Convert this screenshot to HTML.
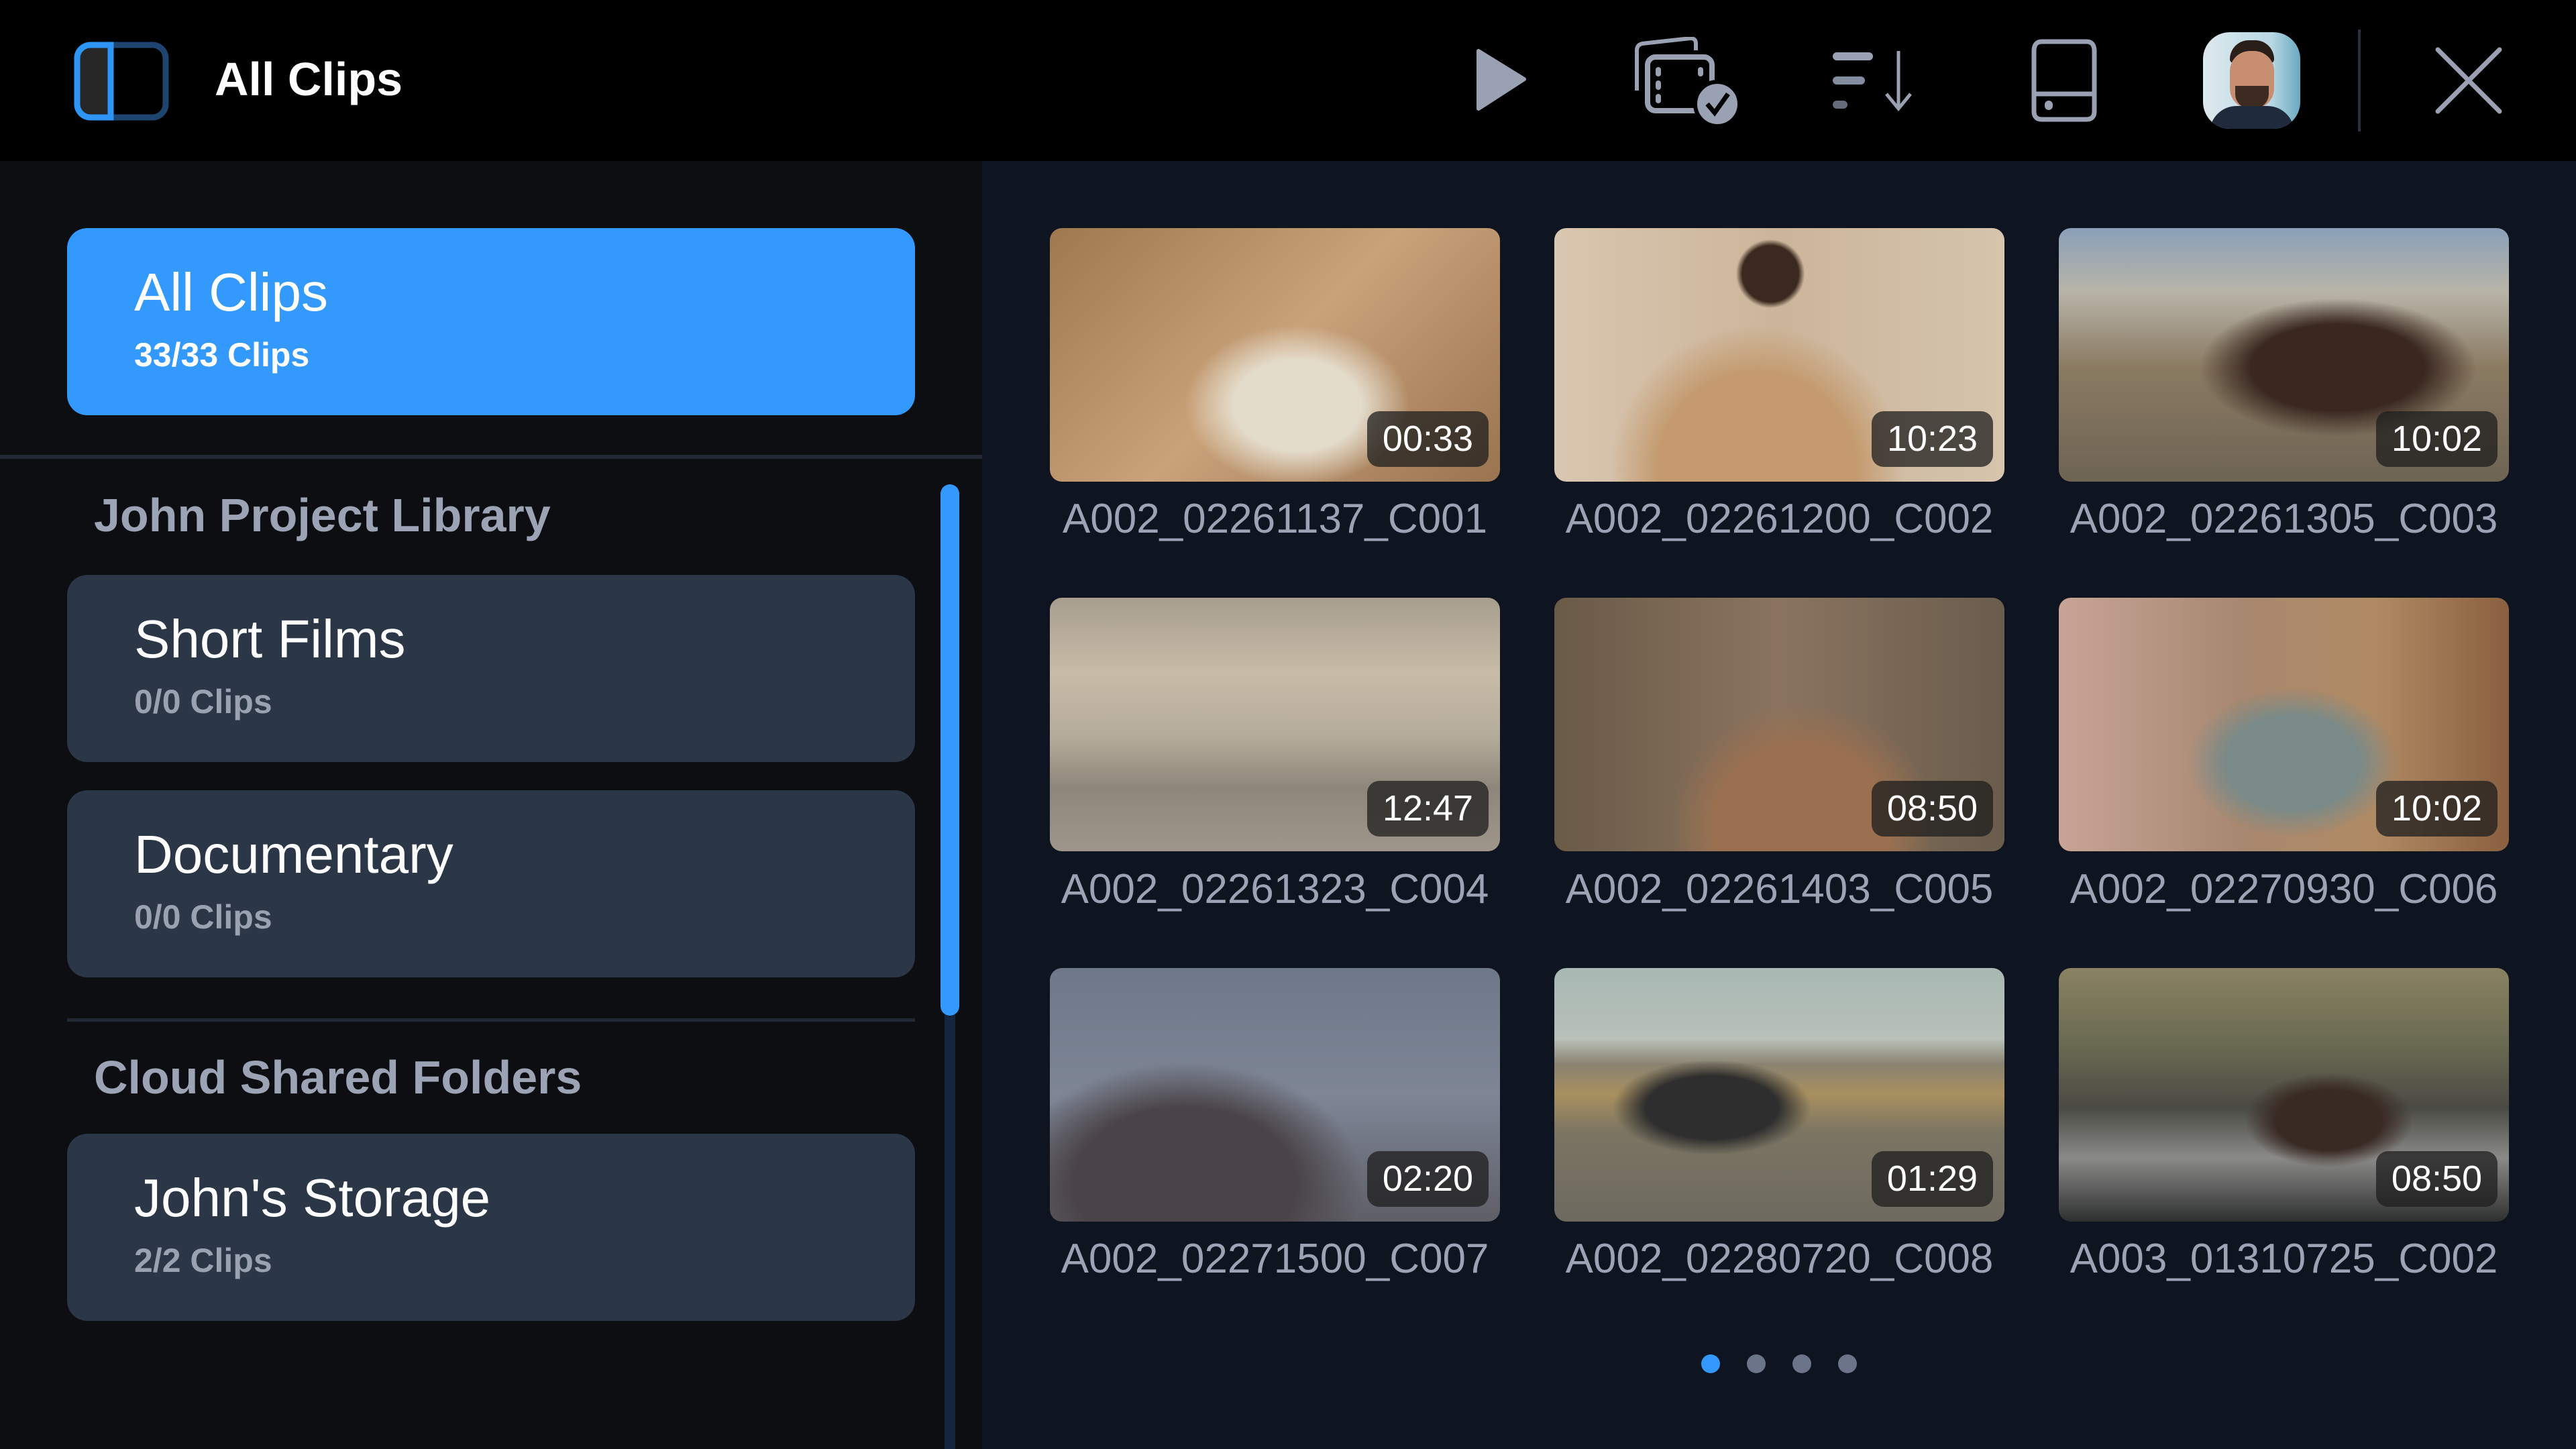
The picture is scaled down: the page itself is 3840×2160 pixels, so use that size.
<!DOCTYPE html>
<html><head><meta charset="utf-8"><style>
*{margin:0;padding:0;box-sizing:border-box}
body{width:3840px;height:2160px;overflow:hidden;background:#0e1520;font-family:"Liberation Sans",sans-serif;position:relative}
.abs{position:absolute}
#hdr{left:0;top:0;width:3840px;height:240px;background:#000}
#side{left:0;top:240px;width:1464px;height:1920px;background:#0d0e11}
.card{position:absolute;left:100px;width:1264px;height:279px;border-radius:30px;background:#2b3647}
.card .t{position:absolute;left:100px;top:50px;font-size:80px;color:#fff;white-space:nowrap}
.card .s{position:absolute;left:100px;top:160px;font-size:50px;color:#9aa2b2;font-weight:bold;white-space:nowrap}
.sec{position:absolute;left:140px;font-size:70px;color:#9ba3b4;font-weight:bold;white-space:nowrap}
.th{position:absolute;width:671px;height:378px;border-radius:18px;overflow:hidden}
.bd{position:absolute;right:17px;bottom:22px;width:181px;height:83px;border-radius:18px;background:rgba(30,30,30,.75);color:#fff;font-size:54px;text-align:center;line-height:83px}
.lb{position:absolute;width:671px;text-align:center;font-size:62px;color:#9ba3b4;white-space:nowrap}
.dot{position:absolute;top:2019px;width:28px;height:28px;border-radius:50%;background:#6b7488}
</style></head><body>
<div id="hdr" class="abs"></div>
<!-- header left icon -->
<svg class="abs" style="left:110px;top:62px" width="142" height="118" viewBox="0 0 142 118">
<rect x="5" y="5" width="132" height="108" rx="20" fill="none" stroke="#1e4470" stroke-width="9"/>
<path d="M55 5 H25 A20 20 0 0 0 5 25 V93 A20 20 0 0 0 25 113 H55 Z" fill="#262626" stroke="#2f95f5" stroke-width="9"/>
</svg>
<div class="abs" style="left:320px;top:78px;font-size:70px;color:#fff;font-weight:bold">All Clips</div>
<!-- play -->
<svg class="abs" style="left:2200px;top:70px" width="80" height="100" viewBox="0 0 80 100"><path d="M4 6 L72 48 L4 92 Z" fill="#9aa1b3" stroke="#9aa1b3" stroke-width="6" stroke-linejoin="round"/></svg>
<!-- clips check -->
<svg class="abs" style="left:2432px;top:55px" width="170" height="135" viewBox="0 0 170 135">
<path d="M8 80 V20 Q8 12 16 10 L88 2 Q96 2 96 10 V20" fill="none" stroke="#9aa1b3" stroke-width="6"/>
<rect x="24" y="30" width="96" height="80" rx="12" fill="none" stroke="#9aa1b3" stroke-width="8"/>
<rect x="36" y="45" width="8" height="14" rx="4" fill="#9aa1b3"/><rect x="36" y="65" width="8" height="14" rx="4" fill="#9aa1b3"/><rect x="36" y="85" width="8" height="14" rx="4" fill="#9aa1b3"/>
<rect x="99" y="45" width="8" height="14" rx="4" fill="#9aa1b3"/>
<circle cx="128" cy="100" r="33" fill="#9aa1b3" stroke="#000" stroke-width="6"/>
<path d="M113 100 L124 113 L144 85" fill="none" stroke="#000" stroke-width="7"/>
</svg>
<!-- sort -->
<svg class="abs" style="left:2730px;top:70px" width="140" height="100" viewBox="0 0 140 100">
<rect x="2" y="8" width="60" height="12" rx="6" fill="#9aa1b3"/>
<rect x="2" y="44" width="48" height="12" rx="6" fill="#858ca0"/>
<rect x="2" y="80" width="22" height="12" rx="6" fill="#656b7a"/>
<path d="M100 6 V92 M82 70 L100 92 L118 70" fill="none" stroke="#9aa1b3" stroke-width="5"/>
</svg>
<!-- drive -->
<svg class="abs" style="left:3024px;top:58px" width="110" height="124" viewBox="0 0 110 124">
<path d="M20 4 H86 Q98 4 98 18 V108 Q98 120 86 120 H20 Q8 120 8 108 V18 Q8 4 20 4 Z" fill="none" stroke="#9aa1b3" stroke-width="7"/>
<path d="M8 82 H98" stroke="#9aa1b3" stroke-width="7"/>
<rect x="24" y="92" width="12" height="14" rx="6" fill="#9aa1b3"/>
</svg>
<!-- avatar -->
<div class="abs" style="left:3284px;top:48px;width:145px;height:144px;border-radius:40px;overflow:hidden;background:linear-gradient(90deg,#dfe9ee,#b8d8e4 70%,#6aa9c0)">
<div class="abs" style="left:40px;top:12px;width:66px;height:34px;border-radius:30px 30px 6px 6px;background:#2a1e18"></div>
<div class="abs" style="left:40px;top:28px;width:66px;height:86px;border-radius:30px;background:#c88e72"></div>
<div class="abs" style="left:48px;top:80px;width:50px;height:34px;border-radius:0 0 22px 22px;background:#3d2a20"></div>
<div class="abs" style="left:10px;top:110px;width:126px;height:60px;border-radius:40px 40px 0 0;background:#1f2a3d"></div>
</div>
<div class="abs" style="left:3515px;top:44px;width:4px;height:152px;background:#2a2f3d"></div>
<svg class="abs" style="left:3628px;top:70px" width="104" height="100" viewBox="0 0 104 100"><path d="M6 4 L98 96 M98 4 L6 96" stroke="#9aa1b3" stroke-width="7" stroke-linecap="round"/></svg>

<div id="side" class="abs"></div>
<div class="card" style="top:340px;background:#3399fc"><div class="t">All Clips</div><div class="s" style="color:#fff">33/33 Clips</div></div>
<div class="abs" style="left:0;top:678px;width:1464px;height:6px;background:#222836"></div>
<div class="sec" style="top:728px">John Project Library</div>
<div class="card" style="top:857px"><div class="t">Short Films</div><div class="s">0/0 Clips</div></div>
<div class="card" style="top:1178px"><div class="t">Documentary</div><div class="s">0/0 Clips</div></div>
<div class="abs" style="left:100px;top:1518px;width:1264px;height:5px;background:#222836"></div>
<div class="sec" style="top:1566px">Cloud Shared Folders</div>
<div class="card" style="top:1690px"><div class="t">John's Storage</div><div class="s">2/2 Clips</div></div>
<div class="abs" style="left:1408px;top:730px;width:16px;height:1430px;background:#13243d"></div>
<div class="abs" style="left:1402px;top:722px;width:28px;height:792px;border-radius:14px;background:#3399fc"></div>

<!-- thumbnails -->
<div class="th" style="left:1565px;top:340px;background:radial-gradient(ellipse at 55% 70%,#e4dccb 0 18%,transparent 32%),linear-gradient(135deg,#a07850,#c9a27a 50%,#9a7450)"><div class="bd">00:33</div></div>
<div class="th" style="left:2317px;top:340px;background:radial-gradient(ellipse at 45% 95%,#c49a6e 0 28%,transparent 42%),radial-gradient(circle at 48% 18%,#3b281e 0 9%,transparent 11%),linear-gradient(90deg,#d9c6b0,#cbb59a 50%,#d6c4ae)"><div class="bd">10:23</div></div>
<div class="th" style="left:3069px;top:340px;background:radial-gradient(ellipse at 62% 55%,#3a2820 0 22%,transparent 35%),linear-gradient(180deg,#8aa0b8 0,#b8b4a8 25%,#8a7a62 55%,#6e6454)"><div class="bd">10:02</div></div>
<div class="th" style="left:1565px;top:891px;background:linear-gradient(180deg,#a89e8e 0,#c8bca8 30%,#b5ab9a 55%,#8e867a 75%,#9e968a)"><div class="bd">12:47</div></div>
<div class="th" style="left:2317px;top:891px;background:radial-gradient(ellipse at 55% 90%,#9a7050 0 25%,transparent 38%),linear-gradient(90deg,#6a5a48,#8a7460 50%,#6a5c4c)"><div class="bd">08:50</div></div>
<div class="th" style="left:3069px;top:891px;background:radial-gradient(ellipse at 52% 65%,#7a8a88 0 20%,transparent 32%),linear-gradient(90deg,#c8a498,#a88870 40%,#b08a64 70%,#8a6040)"><div class="bd">10:02</div></div>
<div class="th" style="left:1565px;top:1443px;background:radial-gradient(ellipse at 30% 85%,#4a4448 0 25%,transparent 40%),linear-gradient(180deg,#6e7888,#7e8696 50%,#5e5e66)"><div class="bd">02:20</div></div>
<div class="th" style="left:2317px;top:1443px;background:radial-gradient(ellipse at 35% 55%,#2e2e2e 0 16%,transparent 24%),linear-gradient(180deg,#a8b8b4 0,#b8c0b8 28%,#8a8270 38%,#a89060 50%,#7a7462 65%,#6e6a60)"><div class="bd">01:29</div></div>
<div class="th" style="left:3069px;top:1443px;background:radial-gradient(ellipse at 60% 60%,#3a2a24 0 14%,transparent 22%),linear-gradient(180deg,#8a8262 0,#6a6a52 30%,#4a4a44 55%,#8a8a88 75%,#2e3030)"><div class="bd">08:50</div></div>

<div class="lb" style="left:1565px;top:738px">A002_02261137_C001</div>
<div class="lb" style="left:2317px;top:738px">A002_02261200_C002</div>
<div class="lb" style="left:3069px;top:738px">A002_02261305_C003</div>
<div class="lb" style="left:1565px;top:1290px">A002_02261323_C004</div>
<div class="lb" style="left:2317px;top:1290px">A002_02261403_C005</div>
<div class="lb" style="left:3069px;top:1290px">A002_02270930_C006</div>
<div class="lb" style="left:1565px;top:1841px">A002_02271500_C007</div>
<div class="lb" style="left:2317px;top:1841px">A002_02280720_C008</div>
<div class="lb" style="left:3069px;top:1841px">A003_01310725_C002</div>

<div class="dot" style="left:2536px;background:#3399fc"></div>
<div class="dot" style="left:2604px"></div>
<div class="dot" style="left:2672px"></div>
<div class="dot" style="left:2740px"></div>
</body></html>
